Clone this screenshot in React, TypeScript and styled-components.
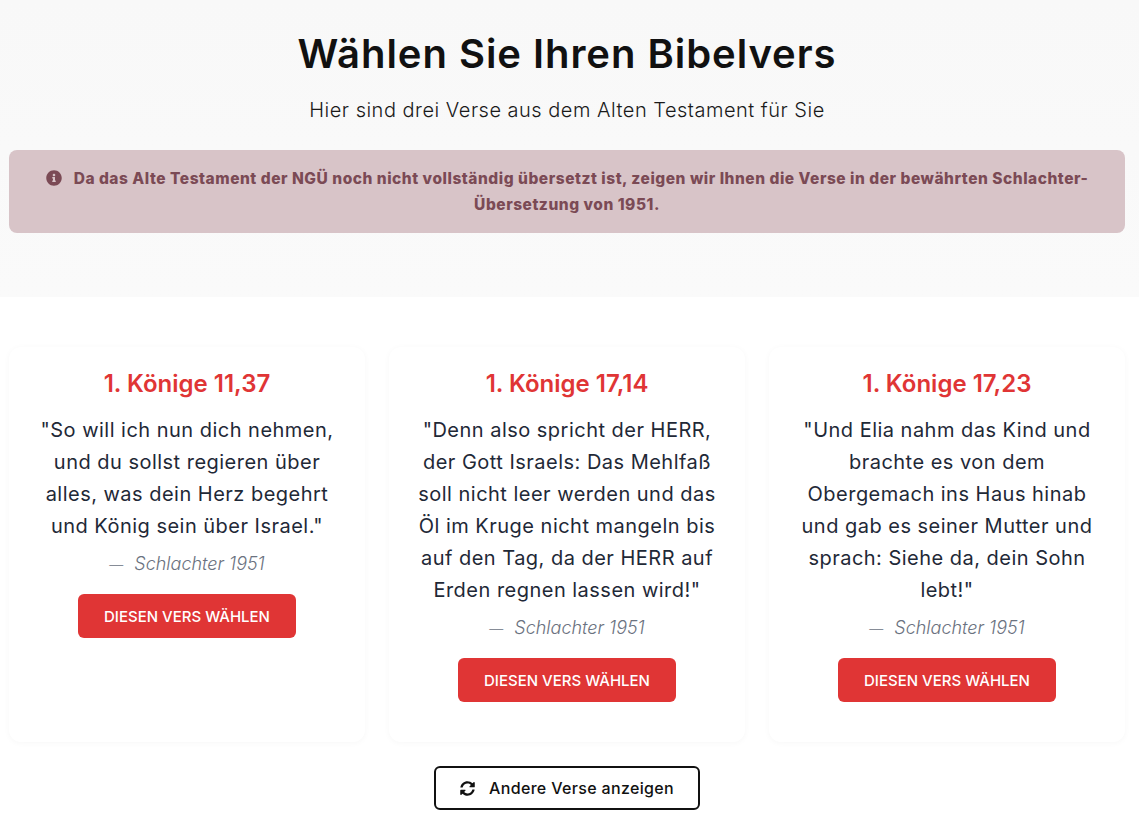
import React from "react";
import styled, { createGlobalStyle } from "styled-components";
import { FaInfoCircle, FaSyncAlt } from "react-icons/fa";

const Global = createGlobalStyle`
  html, body {
    margin: 0;
    padding: 0;
    height: 814px;
    overflow: hidden;
    background: #fff;
    font-family: "Inter", "Noto Sans", sans-serif;
  }
  * { box-sizing: border-box; }
`;

const Hero = styled.header`
  height: 297px;
  background: linear-gradient(180deg, #f8f8f8, #fafafa);
  padding: 27px 14px 0 9px;
  text-align: center;
`;

const Title = styled.h1`
  margin: 0;
  font-size: 40px;
  line-height: 54px;
  font-weight: 600;
  color: #111;
  letter-spacing: 0.95px;
`;

const Subtitle = styled.p`
  margin: 13px 0 0;
  font-size: 20px;
  line-height: 32px;
  font-weight: 300;
  color: #1a1a1a;
  letter-spacing: 0.5px;
`;

const Notice = styled.div`
  margin-top: 24px;
  height: 83px;
  padding: 16px 24px;
  border-radius: 8px;
  background: #d8c4c8;
  color: #7b4a55;
  font-size: 15.5px;
  line-height: 26px;
  font-weight: 800;
  letter-spacing: 0.53px;
`;

const NoticeIcon = styled(FaInfoCircle)`
  width: 16px;
  height: 16px;
  margin-right: 12px;
  vertical-align: -2px;
`;

const Cards = styled.section`
  display: grid;
  grid-template-columns: repeat(3, 356px);
  gap: 24px;
  padding: 50px 14px 0 9px;
`;

const Card = styled.article`
  height: 395px;
  padding: 20px 24px 0;
  border-radius: 12px;
  background: #fff;
  box-shadow: 0 1px 6px rgba(0, 0, 0, 0.035);
  text-align: center;
`;

const Reference = styled.h2`
  margin: 0;
  font-size: 24px;
  line-height: 34px;
  font-weight: 600;
  color: #e03535;
`;

const Verse = styled.p`
  margin: 13px 0 0;
  font-size: 20px;
  line-height: 32px;
  font-weight: 400;
  color: #1f2937;
  letter-spacing: 0.48px;
`;

const Source = styled.p`
  margin: 6px 0 0;
  font-size: 18px;
  line-height: 32px;
  font-style: italic;
  font-weight: 300;
  color: #6b7280;
`;

const Dash = styled.span`
  font-size: 14px;
  line-height: 1;
  font-style: normal;
  margin-right: 11px;
`;

const Choose = styled.button`
  display: block;
  width: 218px;
  height: 44px;
  margin: 14px auto 0;
  border: 0;
  border-radius: 6px;
  background: #e03535;
  color: #fff;
  font-family: inherit;
  font-size: 15px;
  font-weight: 500;
`;

const Footer = styled.div`
  display: flex;
  justify-content: center;
  padding: 24px 14px 0 9px;
`;

const Other = styled.button`
  display: flex;
  align-items: center;
  justify-content: center;
  gap: 14px;
  width: 266px;
  height: 44px;
  border: 2px solid #111;
  border-radius: 6px;
  background: #fff;
  color: #111;
  font-family: inherit;
  font-size: 16px;
  font-weight: 500;
  letter-spacing: 0.33px;
`;

const verses = [
  {
    ref: "1. Könige 11,37",
    text: "\"So will ich nun dich nehmen, und du sollst regieren über alles, was dein Herz begehrt und König sein über Israel.\"",
  },
  {
    ref: "1. Könige 17,14",
    text: "\"Denn also spricht der HERR, der Gott Israels: Das Mehlfaß soll nicht leer werden und das Öl im Kruge nicht mangeln bis auf den Tag, da der HERR auf Erden regnen lassen wird!\"",
  },
  {
    ref: "1. Könige 17,23",
    text: "\"Und Elia nahm das Kind und brachte es von dem Obergemach ins Haus hinab und gab es seiner Mutter und sprach: Siehe da, dein Sohn lebt!\"",
  },
];

export default function App() {
  return (
    <>
      <Global />
      <Hero>
        <Title>Wählen Sie Ihren Bibelvers</Title>
        <Subtitle>Hier sind drei Verse aus dem Alten Testament für Sie</Subtitle>
        <Notice>
          <NoticeIcon />
          Da das Alte Testament der NGÜ noch nicht vollständig übersetzt ist, zeigen wir Ihnen die Verse in der bewährten Schlachter-Übersetzung von 1951.
        </Notice>
      </Hero>
      <Cards>
        {verses.map((v) => (
          <Card key={v.ref}>
            <Reference>{v.ref}</Reference>
            <Verse>{v.text}</Verse>
            <Source>
              <Dash>—</Dash>Schlachter 1951
            </Source>
            <Choose>DIESEN VERS WÄHLEN</Choose>
          </Card>
        ))}
      </Cards>
      <Footer>
        <Other>
          <FaSyncAlt size={15} />
          Andere Verse anzeigen
        </Other>
      </Footer>
    </>
  );
}
